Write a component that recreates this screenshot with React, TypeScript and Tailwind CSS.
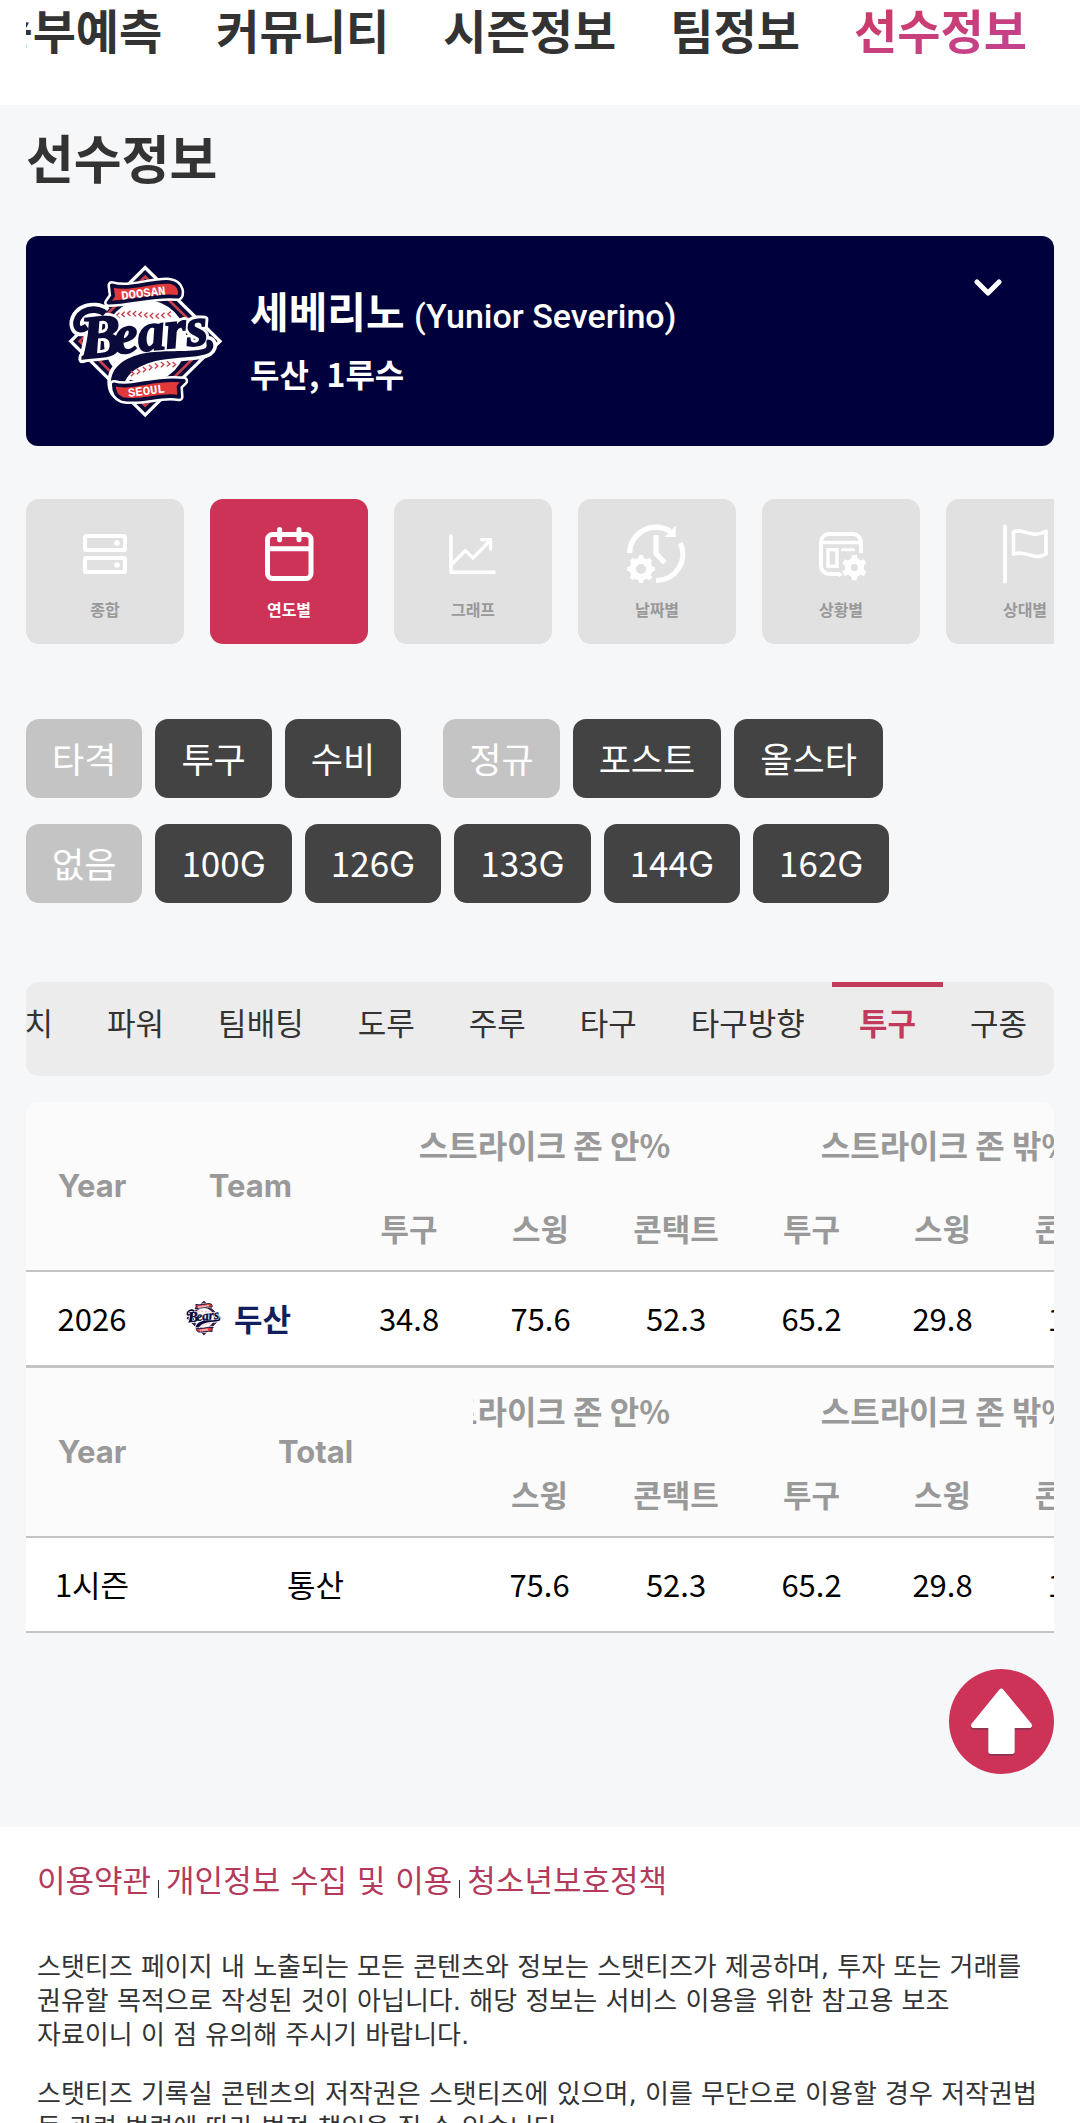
import React from "react";

const navItems = ["승부예측", "커뮤니티", "시즌정보", "팀정보", "선수정보"];
const recordTabs = ["가치", "파워", "팀배팅", "도루", "주루", "타구", "타구방향", "투구", "구종"];

function gearPath(cx: number, cy: number, outer: number, inner: number, hole: number, teeth: number) {
  const step = (Math.PI * 2) / teeth;
  const points: string[] = [];
  for (let i = 0; i < teeth; i++) {
    const a = i * step - Math.PI / 2;
    const corners: [number, number][] = [
      [inner, -0.3],
      [outer, -0.19],
      [outer, 0.19],
      [inner, 0.3],
    ];
    corners.forEach(([r, k]) => {
      const t = a + k * step;
      points.push(`${(cx + r * Math.cos(t)).toFixed(2)} ${(cy + r * Math.sin(t)).toFixed(2)}`);
    });
  }
  return (
    `M${points.join("L")}Z` +
    `M${cx - hole} ${cy}a${hole} ${hole} 0 1 0 ${hole * 2} 0a${hole} ${hole} 0 1 0 ${-hole * 2} 0Z`
  );
}

function Icon({ children }: { children: React.ReactNode }) {
  return (
    <svg viewBox="0 0 64 64" className="size-16" fill="none" stroke="#fff" aria-hidden="true">
      {children}
    </svg>
  );
}

const menu = [
  {
    label: "종합",
    icon: (
      <Icon>
        <g strokeWidth="4">
          <rect x="12" y="15" width="40" height="14" rx="1.5" />
          <rect x="12" y="37" width="40" height="14" rx="1.5" />
        </g>
        <g fill="#fff" stroke="none">
          <circle cx="44" cy="22" r="2.8" />
          <circle cx="44" cy="44" r="2.8" />
        </g>
      </Icon>
    ),
  },
  {
    label: "연도별",
    icon: (
      <Icon>
        <g strokeWidth="5" strokeLinecap="round">
          <rect x="10.5" y="13.5" width="43.5" height="44" rx="5" />
          <path d="M11 27.8H53M22.6 8.5V18.8M42 8.5V18.8" />
        </g>
      </Icon>
    ),
  },
  {
    label: "그래프",
    icon: (
      <Icon>
        <g strokeWidth="3.6" strokeLinecap="round">
          <path d="M10 15V51.2H53" strokeLinejoin="round" />
          <path d="M10.5 43.5L24.4 29.7L32.2 37L49 19.5M40.5 18.6H49.6V28" strokeWidth="3.3" />
        </g>
      </Icon>
    ),
  },
  {
    label: "날짜별",
    icon: (
      <Icon>
        <path
          d="M4.5 32A26.5 26.5 0 0 1 45 10.2M55.3 21.8A26.5 26.5 0 0 1 31 59.5M31 14V32.5L39.7 41.7"
          strokeWidth="5.2"
        />
        <path d="M50.7 4.7V16H39.3Z" fill="#fff" stroke="none" />
        <path d={gearPath(16, 48, 14, 11.4, 5, 8)} fill="#fff" fillRule="evenodd" stroke="none" />
      </Icon>
    ),
  },
  {
    label: "상황별",
    icon: (
      <Icon>
        <path
          d="M52 32V21A8 8 0 0 0 44 13H20A8 8 0 0 0 12 21V45A8 8 0 0 0 20 53H29Q31 53 32 55"
          strokeWidth="4"
        />
        <path d="M12 21.5H52" strokeWidth="3.4" />
        <rect x="19" y="28.7" width="9" height="16.5" strokeWidth="3.4" />
        <path d="M33.5 28.7H44.5" strokeWidth="3" strokeLinecap="round" />
        <path d={gearPath(45.4, 46.6, 12.8, 9.6, 3.6, 6)} fill="#fff" fillRule="evenodd" stroke="none" />
      </Icon>
    ),
  },
  {
    label: "상대별",
    icon: (
      <Icon>
        <path d="M12 5.5V60.5" strokeWidth="3.8" strokeLinecap="round" />
        <path
          d="M20.5 10.6C31 6.500 38 18.500 53 10.200V33C40 40.500 32 28 20.500 33.200Z"
          strokeWidth="3.6"
          strokeLinejoin="round"
        />
      </Icon>
    ),
  },
];

function Stitches({ points, dir }: { points: [number, number][]; dir: 1 | -1 }) {
  return (
    <g fill="none" stroke="#c9404a" strokeWidth="4">
      {points.map(([x, y]) => (
        <path key={x} d={`M${x + 5 * dir} ${y - 8}L${x - 4 * dir} ${y}L${x + 5 * dir} ${y + 8}`} />
      ))}
    </g>
  );
}

function BearsLogo({ className }: { className: string }) {
  const script = "M66 312C78 270 84 236 86 196L118 182L104 300Z";
  const swoosh =
    "M190 392C196 352 238 326 296 314C352 304 404 306 436 296C468 286 462 250 440 252C432 262 444 270 434 278C404 290 330 284 270 290C196 300 148 334 152 386C154 412 166 424 190 430Z";
  return (
    <svg viewBox="20 26 470 464" className={className} role="img" aria-label="Doosan Bears">
      <path d="M254 30L485 257L254 485L24 257Z" fill="#fff" />
      <path d="M254 44L471 257L254 471L38 257Z" fill="#0b0b3b" />
      <path d="M254 64L450 257L254 450L58 257Z" fill="none" stroke="#c9404a" strokeWidth="8" />
      <circle cx="254" cy="257" r="124" fill="#fff" />
      <Stitches
        dir={1}
        points={[[172, 180], [188, 177], [205, 174], [222, 175], [239, 177], [256, 179], [273, 181], [290, 182], [307, 180], [326, 176]]}
      />
      <path d={swoosh} fill="#fff" stroke="#fff" strokeWidth="22" strokeLinejoin="round" />
      <g
        fontFamily="'Liberation Serif', serif"
        fontWeight="700"
        fontStyle="italic"
        stroke="#fff"
        strokeWidth="22"
        strokeLinejoin="round"
        fill="#0b0b3b"
      >
        <path d="M80 214C44 240 36 190 70 170C92 158 120 162 134 174" fill="none" strokeWidth="42" />
        <path d={script} />
        <g transform="rotate(-6 250 250)">
          <text x="62" y="290" fontSize="182">B</text>
          <text x="160" y="286" fontSize="164">ears</text>
        </g>
      </g>
      <path d={swoosh} fill="#0b0b3b" />
      <path d="M80 214C44 240 36 190 70 170C92 158 120 162 134 174" fill="none" stroke="#0b0b3b" strokeWidth="20" />
      <path d={script} fill="#0b0b3b" />
      <g
        fontFamily="'Liberation Serif', serif"
        fontWeight="700"
        fontStyle="italic"
        fill="#0b0b3b"
        stroke="#0b0b3b"
        strokeWidth="5"
        transform="rotate(-6 250 250)"
        aria-hidden="true"
      >
        <text x="62" y="290" fontSize="182">B</text>
        <text x="160" y="286" fontSize="164">ears</text>
      </g>
      <Stitches
        dir={-1}
        points={[[216, 354], [234, 348], [252, 342], [270, 336], [288, 331], [306, 327], [324, 325], [341, 327]]}
      />
      <g stroke="#fff" strokeWidth="26" strokeLinejoin="round">
        <path d="M154 90C210 106 270 76 326 80C362 84 364 124 350 124C290 116 214 140 144 142L158 122Z" />
        <path d="M160 386C220 402 280 364 370 376L354 392L356 424C300 412 250 442 186 430C164 422 160 402 160 386Z" />
      </g>
      <g fill="#e0383b" stroke="#0b0b3b" strokeWidth="11" strokeLinejoin="round">
        <path d="M154 90C210 106 270 76 326 80C362 84 364 124 350 124C290 116 214 140 144 142L158 122Z" />
        <path d="M160 386C220 402 280 364 370 376L354 392L356 424C300 412 250 442 186 430C164 422 160 402 160 386Z" />
      </g>
      <g fill="#fff" fontFamily="'Liberation Mono', monospace" fontWeight="700" fontSize="37">
        <text x="184" y="133" transform="rotate(-7 184 133)">DOOSAN</text>
        <text x="204" y="424" transform="rotate(-7 204 424)">SEOUL</text>
      </g>
    </svg>
  );
}

function FilterButton({ label, selected = false }: { label: string; selected?: boolean }) {
  const digits = label.endsWith("G") ? label.slice(0, -1) : null;
  return (
    <button
      type="button"
      className={`h-[79px] rounded-[13px] px-[26px] pb-0.5 text-[35px] leading-[52px] text-white ${
        selected ? "bg-[#c4c4c4]" : "bg-[#434343]"
      }`}
    >
      {digits ? (
        <>
          {digits}
          <span className="font-[Inter]">G</span>
        </>
      ) : (
        label
      )}
    </button>
  );
}

const zoneHead = "h-[84px] font-bold text-[32px]";
const columnHead = "h-[85px] font-bold";
const valueCell = "h-[95px]";

export default function App() {
  return (
    <div className="h-dvh overflow-hidden bg-white font-['Noto_Sans_CJK_KR',sans-serif] text-[#333]">
      <header className="h-[105px] px-[26px]">
        <nav className="flex justify-end overflow-hidden">
          {navItems.map((item, i) => (
            <a
              key={item}
              href="#"
              className={`shrink-0 px-[27px] text-[47px] leading-[58px] font-bold ${
                i === 4 ? "bg-linear-to-br from-[#cf3557] to-[#c1449a] bg-clip-text text-transparent" : ""
              }`}
            >
              {item}
            </a>
          ))}
        </nav>
      </header>

      <main className="bg-[#f6f7f9] px-[26px] pt-5 pb-[53px]">
        <h1 className="text-[52px] leading-[64px] font-bold">선수정보</h1>

        <section className="mt-[47px] flex items-start rounded-xl bg-[#00003d] pt-7 pr-[52px] pb-[27px] pl-[41px] text-white">
          <BearsLogo className="h-[155px] w-[157px] shrink-0" />
          <div className="ml-[26px] grow pt-4">
            <h2 className="text-[42px] leading-[60px] font-bold">
              세베리노 <span className="font-[Roboto] text-[34px] font-medium">(Yunior Severino)</span>
            </h2>
            <p className="mt-1 text-[32px] leading-[46px] font-bold">두산, 1루수</p>
          </div>
          <button type="button" aria-label="선수 메뉴 열기" className="mt-[14px]">
            <svg viewBox="0 0 28 20" className="h-5 w-7" fill="none" stroke="#fff" strokeWidth="5">
              <path d="M3 4L14 15L25 4" strokeLinecap="round" strokeLinejoin="round" />
            </svg>
          </button>
        </section>

        <nav className="mt-[53px] flex gap-[26px] overflow-hidden">
          {menu.map(({ label, icon }, i) => (
            <button
              key={label}
              type="button"
              className={`flex w-[158px] shrink-0 flex-col items-center gap-3 rounded-[13px] pt-[22px] pb-[23px] text-base font-bold ${
                i === 1 ? "bg-[#cd3357] text-white" : "bg-[#e1e1e1] text-[#999]"
              }`}
            >
              {icon}
              <span>{label}</span>
            </button>
          ))}
        </nav>

        <div className="mt-[75px] flex flex-col gap-[26px]">
          <div className="flex gap-[42px]">
            <div className="flex gap-[13px]">
              <FilterButton label="타격" selected />
              <FilterButton label="투구" />
              <FilterButton label="수비" />
            </div>
            <div className="flex gap-[13px]">
              <FilterButton label="정규" selected />
              <FilterButton label="포스트" />
              <FilterButton label="올스타" />
            </div>
          </div>
          <div className="flex gap-[13px]">
            <FilterButton label="없음" selected />
            <FilterButton label="100G" />
            <FilterButton label="126G" />
            <FilterButton label="133G" />
            <FilterButton label="144G" />
            <FilterButton label="162G" />
          </div>
        </div>

        <nav className="mt-[79px] flex h-[94px] justify-end overflow-hidden rounded-[13px] bg-[#ececec]">
          {recordTabs.map((tab) => (
            <a
              key={tab}
              href="#"
              className={`shrink-0 border-t-[5px] px-[27px] pt-3 text-[31px] leading-[46px] ${
                tab === "투구" ? "border-[#c23a5c] font-bold text-[#c23a5c]" : "border-transparent"
              }`}
            >
              {tab}
            </a>
          ))}
        </nav>

        <section className="mt-[26px] overflow-hidden rounded-t-[13px] bg-white text-[31px] leading-[46px] text-black">
          <table className="w-[1121px] table-fixed border-collapse text-center">
            <colgroup>
              <col className="w-[132px]" />
              <col className="w-[185px]" />
              <col className="w-[132px]" />
              <col className="w-[131px]" />
              <col className="w-[140px]" />
              <col className="w-[131px]" />
              <col className="w-[131px]" />
              <col className="w-[139px]" />
            </colgroup>
            <thead className="border-b-2 border-[#c4c4c4] bg-[#fbfbfb] text-[#999]">
              <tr>
                <th rowSpan={2} className="font-[Inter] font-bold">Year</th>
                <th rowSpan={2} className="font-[Inter] font-bold">Team</th>
                <th colSpan={3} className={zoneHead}>스트라이크 존 안%</th>
                <th colSpan={3} className={zoneHead}>스트라이크 존 밖%</th>
              </tr>
              <tr>
                <th className={columnHead}>투구</th>
                <th className={columnHead}>스윙</th>
                <th className={columnHead}>콘택트</th>
                <th className={columnHead}>투구</th>
                <th className={columnHead}>스윙</th>
                <th className={columnHead}>콘택트</th>
              </tr>
            </thead>
            <tbody className="border-b-[3px] border-[#c4c4c4]">
              <tr>
                <td className={valueCell}>2026</td>
                <td className={valueCell}>
                  <a href="#" className="flex items-center gap-[11px] pl-[27px] font-bold text-[#131f5c]">
                    <BearsLogo className="size-[38px]" />
                    두산
                  </a>
                </td>
                <td className={valueCell}>34.8</td>
                <td className={valueCell}>75.6</td>
                <td className={valueCell}>52.3</td>
                <td className={valueCell}>65.2</td>
                <td className={valueCell}>29.8</td>
                <td className={valueCell}>11.1</td>
              </tr>
            </tbody>
          </table>
          <table className="w-[1121px] table-fixed border-collapse text-center">
            <colgroup>
              <col className="w-[132px]" />
              <col className="w-[315px]" />
              <col className="w-[133px]" />
              <col className="w-[140px]" />
              <col className="w-[131px]" />
              <col className="w-[131px]" />
              <col className="w-[139px]" />
            </colgroup>
            <thead className="border-b-2 border-[#c4c4c4] bg-[#fbfbfb] text-[#999]">
              <tr>
                <th rowSpan={2} className="font-[Inter] font-bold">Year</th>
                <th rowSpan={2} className="font-[Inter] font-bold">Total</th>
                <th colSpan={2} className={zoneHead}>
                  <div className="flex justify-end overflow-hidden pr-[76px]">
                    <span className="whitespace-nowrap">스트라이크 존 안%</span>
                  </div>
                </th>
                <th colSpan={3} className={zoneHead}>스트라이크 존 밖%</th>
              </tr>
              <tr>
                <th className={columnHead}>스윙</th>
                <th className={columnHead}>콘택트</th>
                <th className={columnHead}>투구</th>
                <th className={columnHead}>스윙</th>
                <th className={columnHead}>콘택트</th>
              </tr>
            </thead>
            <tbody className="border-b-2 border-[#c4c4c4]">
              <tr>
                <td className={valueCell}>1시즌</td>
                <td className={valueCell}>통산</td>
                <td className={valueCell}>75.6</td>
                <td className={valueCell}>52.3</td>
                <td className={valueCell}>65.2</td>
                <td className={valueCell}>29.8</td>
                <td className={valueCell}>11.1</td>
              </tr>
            </tbody>
          </table>
        </section>

        <div className="mt-9 flex justify-end">
          <button type="button" aria-label="맨 위로" className="size-[105px] rounded-full bg-[#cd3357]">
            <svg viewBox="87 60 315 315" className="size-full" aria-hidden="true">
              <g strokeWidth="16" strokeLinejoin="round">
                <path d="M244 132L329 234H276V312H213V234H160Z" fill="#8f3352" stroke="#8f3352" />
                <path d="M244 127L328 229H276V307H213V229H161Z" fill="#fff" stroke="#fff" />
              </g>
            </svg>
          </button>
        </div>
      </main>

      <footer className="px-[37px] pt-8 font-['DejaVu_Sans','Noto_Sans_CJK_KR',sans-serif]">
        <div className="flex items-center gap-[7px] text-[31px] leading-[44px] text-[#b33a5b]">
          <a href="#">이용약관</a>
          <span className="mt-4 h-[18px] w-px bg-[#333]" />
          <a href="#">개인정보 수집 및 이용</a>
          <span className="mt-4 h-[18px] w-px bg-[#333]" />
          <a href="#">청소년보호정책</a>
        </div>
        <p className="mt-[47px] text-[26px] leading-[34px] break-keep">
          스탯티즈 페이지 내 노출되는 모든 콘텐츠와 정보는 스탯티즈가 제공하며, 투자 또는 거래를 권유할 목적으로 작성된 것이
          아닙니다. 해당 정보는 서비스 이용을 위한 참고용 보조 자료이니 이 점 유의해 주시기 바랍니다.
        </p>
        <p className="mt-[25px] text-[26px] leading-[34px] break-keep">
          스탯티즈 기록실 콘텐츠의 저작권은 스탯티즈에 있으며, 이를 무단으로 이용할 경우 저작권법 등 관련 법령에 따라 법적
          책임을 질 수 있습니다.
        </p>
      </footer>
    </div>
  );
}
